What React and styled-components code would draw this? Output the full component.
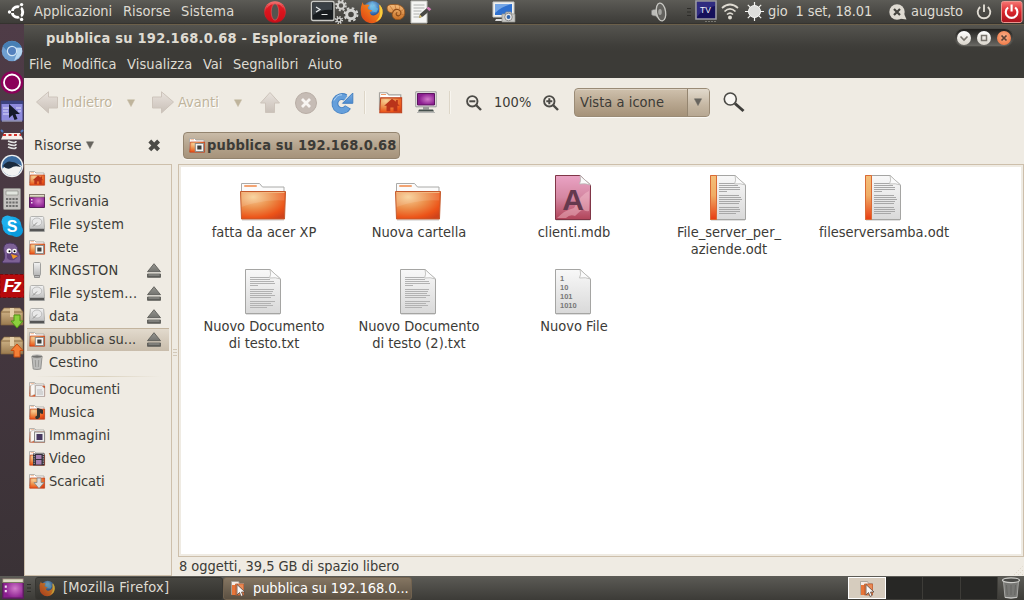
import React from 'react';
import styled, { createGlobalStyle } from 'styled-components';

const Global = createGlobalStyle`
  * { box-sizing: border-box; }
  body {
    margin: 0;
    overflow: hidden;
    font: 14.5px/17px "DejaVu Sans Condensed", "DejaVu Sans", sans-serif;
    font-stretch: condensed;
    color: #3c3b37;
  }
  svg { display: block; flex: none; overflow: visible; }
`;

/* ---------- layout ---------- */
const Desktop = styled.div`
  width: 1024px; height: 600px; display: flex; flex-direction: column; background: #efebe3;
`;
const TopPanel = styled.header`
  height: 24px; flex: none; display: flex; align-items: center; color: #dfdbd2;
  background: linear-gradient(#5c5b56, #454440 70%, #3d3c38);
  border-bottom: 1px solid #35332f;
`;
const Cell = styled.div`
  flex: none; width: ${p => p.$w}px; margin-left: ${p => p.$gap || 0}px; white-space: pre;
  display: flex; align-items: center; height: 23px; letter-spacing: ${p => p.$ls || 0}px;
`;
const Middle = styled.div`height: 552px; flex: none; display: flex;`;
const Launcher = styled.nav`
  width: 24px; flex: none; background: linear-gradient(#4f3c47, #453740 50%, #3a3236);
  display: flex; flex-direction: column;
`;
const LaunchItem = styled.div`flex: none; height: ${p => p.$h}px; margin-top: ${p => p.$gap}px;`;
const Win = styled.section`width: 1000px; display: flex; flex-direction: column; background: #efebe3;`;
const TitleBar = styled.div`
  height: 27px; flex: none; padding: 1px 10px 0 22px; display: flex; align-items: center; justify-content: space-between;
  background: linear-gradient(#55544f, #403f3b 75%, #3c3b37); border-top: 1px solid #6b5f4a;
  color: #dfdbd2; font-weight: bold; white-space: pre; letter-spacing: .22px;
`;
const MenuBar = styled.div`
  height: 27px; flex: none; padding: 0 0 1px 5px; display: flex; align-items: center; background: #3c3b37; color: #dfdbd2;
`;
const MenuEntry = styled.span`width: ${p => p.$w}px; white-space: pre; letter-spacing: ${p => p.$ls || 0}px;`;
const Controls = styled.div`
  width: 60px; height: 19px; border-radius: 10px; display: flex; align-items: center; justify-content: space-between;
  margin-bottom: 2px; padding: 0 2px; background: linear-gradient(#21201e, #6a6964); border: 1px solid #4b4a45;
`;
const Orb = styled.span`
  width: 14px; height: 14px; border-radius: 50%;
  background: ${p => p.$close ? 'radial-gradient(circle at 50% 40%, #f9b08b, #ef6c35)' : 'linear-gradient(#fff, #d9d4ca)'};
`;
const ToolBar = styled.div`height: 47px; flex: none; display: flex; align-items: center; padding: 2px 0 0 12px;`;
const Tool = styled.div`
  flex: none; width: ${p => p.$w}px; margin-left: ${p => p.$gap || 0}px; white-space: pre;
  color: ${p => p.$off ? '#bfb49c' : '#3c3b37'}; text-shadow: ${p => p.$off ? '1px 1px 0 #fff' : 'none'};
`;
const Rule = styled.div`width: 2px; height: 23px; margin-left: ${p => p.$gap}px; background: linear-gradient(90deg, #ddd6c8 50%, #f8f5ef 50%);`;
const Combo = styled.div`
  width: 136px; height: 29px; margin: -1px 0 0 15px; border: 1px solid #9a8b76; border-radius: 4px; display: flex; overflow: hidden;
  background: linear-gradient(#cfc1ad, #b9a891 50%, #a59279); box-shadow: 0 1px 0 #fbf9f5, inset 0 1px 0 #ded3c4;
`;
const ComboText = styled.div`width: 113px; padding: 5px 0 0 5px; border-right: 1px solid #948570; white-space: pre; letter-spacing: .04px;`;
const ComboArrow = styled.div`
  flex: 1; padding-right: 2px; display: flex; align-items: center; justify-content: center; background: linear-gradient(#e2dacd, #c5b7a3 60%, #b7a792);
`;
const Place = styled.div`height: 39px; flex: none; display: flex; align-items: center; padding: 1px 0 0 10px;`;
const PathButton = styled.div`
  width: 217px; height: 27px; border: 1px solid #93846f; border-radius: 4px; margin-left: 22px; padding: 1px 0 0 5px;
  display: flex; align-items: center; gap: 2px; font-weight: bold; white-space: pre; letter-spacing: .17px;
  background: linear-gradient(#c9bba8, #b3a28b 55%, #a6937b); box-shadow: 0 1px 0 #fbf9f5;
`;
const Body = styled.div`flex: 1; display: flex; min-height: 0;`;
const Sidebar = styled.aside`
  width: 148px; flex: none; border: 1px solid #cdbfab; padding: 2px 2px 0; display: flex; flex-direction: column;
`;
const Row = styled.div`
  height: 23px; flex: none; display: flex; align-items: center; padding: 0 8px 2px 2px; white-space: pre;
  background: ${p => p.$on ? 'linear-gradient(#e2dacd, #c9bdac)' : 'none'};
  border-top: 1px solid ${p => p.$on ? '#c3b49e' : 'transparent'};
`;
const RowText = styled.span`flex: 1; padding-left: 4px; letter-spacing: ${p => p.$ls || 0}px;`;
const RowRule = styled.div`height: 1px; margin: 2px 8px 1px; flex: none; background: linear-gradient(90deg, #efebe3, #d9d0bc, #efebe3);`;
const Handle = styled.div`width: 6px; display: flex; flex-direction: column; justify-content: center; gap: 2px; padding: 0 1px 36px;`;
const HandleLine = styled.i`height: 1px; background: #d2c8b8;`;
const Main = styled.main`flex: 1; display: flex; flex-direction: column;`;
const Files = styled.div`
  height: 393px; border: 1px solid #cdbfab; background: #fff;
  box-shadow: inset 0 0 0 2px #efebe3;
  display: grid; grid-template-columns: repeat(5, 155px); grid-auto-rows: 94px; padding: 9px 0 0 6px;
  align-content: start;
`;
const File = styled.figure`
  margin: 0; display: flex; flex-direction: column; align-items: center; text-align: center; white-space: pre;
`;
const FileName = styled.figcaption`margin-top: 2px; padding-left: 3px; letter-spacing: -.02px;`;
const Status = styled.div`flex: 1; padding: 0 0 0 1px; white-space: pre; display: flex; justify-content: space-between; align-items: flex-end;`;
const StatusText = styled.span`line-height: 19px; letter-spacing: -.05px;`;
const BottomPanel = styled.footer`
  height: 24px; flex: none; display: flex; align-items: center; background: linear-gradient(#5c5b56, #3c3b37); color: #dfdbd2;
`;
const Task = styled.div`
  width: ${p => p.$w}px; margin-left: ${p => p.$gap}px; height: 23px; border-radius: 3px; display: flex; align-items: center; white-space: pre;
  gap: ${p => p.$on ? 6 : 8}px; padding: 0 0 ${p => p.$on ? 0 : 1}px ${p => p.$on ? 5 : 3}px; border: 1px solid ${p => p.$on ? '#71624f' : '#373632'};
  background: ${p => p.$on ? 'linear-gradient(#857662, #5b5042)' : 'linear-gradient(#474641, #32312d)'};
  color: ${p => p.$on ? '#fff' : '#dfdbd2'}; letter-spacing: ${p => p.$on ? -.09 : .24}px;
  svg { opacity: ${p => p.$on ? 1 : .7}; }
`;
const Switcher = styled.div`width: 150px; height: 22px; margin-left: 436px; display: grid; grid-template-columns: repeat(4, 1fr); background: #272725;`;
const Space = styled.div`
  border-right: 1px solid #3d3c38; display: flex; align-items: center; justify-content: center;
  ${p => p.$on && 'border: 1px solid #fff; background: #d6ccbe;'}
`;

/* ---------- small drawings ---------- */
const S = ({ w, h, children }) => <svg width={w} height={h} viewBox={`0 0 ${w} ${h}`}>{children}</svg>;

const Defs = styled.svg`position: absolute;`;
const Gradients = () => (
  <Defs width="0" height="0">
    <defs>
      <linearGradient id="paper" x1="0" y1="0" x2="0" y2="1"><stop stopColor="#f8f8f8" /><stop offset="1" stopColor="#d9d9d9" /></linearGradient>
      <radialGradient id="folder" cx=".28" cy=".2" r=".95"><stop stopColor="#f7cf95" /><stop offset=".45" stopColor="#ec8d49" /><stop offset=".8" stopColor="#ec5318" /><stop offset="1" stopColor="#cf431b" /></radialGradient>
      <linearGradient id="spine" x1="0" y1="0" x2="0" y2="1"><stop stopColor="#f4bf7a" /><stop offset=".45" stopColor="#efad66" /><stop offset="1" stopColor="#e83d13" /></linearGradient>
      <linearGradient id="pink" x1="0" y1="0" x2="0" y2="1"><stop stopColor="#eaa3c4" /><stop offset=".5" stopColor="#d487a2" /><stop offset="1" stopColor="#b14459" /></linearGradient>
      <linearGradient id="metal" x1="0" y1="0" x2="0" y2="1"><stop stopColor="#f4f4f4" /><stop offset="1" stopColor="#b5b5b5" /></linearGradient>
      <linearGradient id="eject" x1="0" y1="0" x2="0" y2="1"><stop stopColor="#969691" /><stop offset="1" stopColor="#5b5b57" /></linearGradient>
      <radialGradient id="purple" cx=".6"><stop stopColor="#d27bcb" /><stop offset="1" stopColor="#8b1f90" /></radialGradient>
      <linearGradient id="fade" x1="0" y1="0" x2="0" y2="1"><stop stopColor="#e8e2dc" /><stop offset="1" stopColor="#c9c0b8" /></linearGradient>
      <linearGradient id="blue" x1="0" y1="0" x2="0" y2="1"><stop stopColor="#7caee2" /><stop offset="1" stopColor="#4a8acf" /></linearGradient>
      <radialGradient id="globe" cx=".5" cy=".3"><stop stopColor="#9ad7f4" /><stop offset="1" stopColor="#1d4f9c" /></radialGradient>
      <linearGradient id="flame" x1="0" y1="1" x2="1" y2="0"><stop stopColor="#dc3a13" /><stop offset=".55" stopColor="#ef7a1c" /><stop offset="1" stopColor="#fcd342" /></linearGradient>
      <linearGradient id="red" x1="0" y1="0" x2="0" y2="1"><stop stopColor="#f77673" /><stop offset=".5" stopColor="#d8262c" /><stop offset="1" stopColor="#a9141e" /></linearGradient>
      <linearGradient id="box" x1="0" y1="0" x2="0" y2="1"><stop stopColor="#d8bd91" /><stop offset="1" stopColor="#9a7a4f" /></linearGradient>
      <linearGradient id="shell" x1="0" y1="0" x2="0" y2="1"><stop stopColor="#f6bd7c" /><stop offset="1" stopColor="#c76f24" /></linearGradient>
    </defs>
  </Defs>
);

const Ubuntu = () => (
  <S w={18} h={20}>
    <circle cx="10.5" cy="10" r="5.2" fill="none" stroke="#fff" strokeWidth="3" />
    <path d="M10.5 10 3 10M10.5 10l4-7M10.5 10l4 7" stroke="#504f4a" strokeWidth="2.2" />
    <circle cx="10.5" cy="10" r="3.6" fill="#4e4d48" />
    <circle cx="2.500" cy="10" r="1.7" fill="#fff" /><circle cx="14.6" cy="2.6" r="1.7" fill="#fff" /><circle cx="14.6" cy="17.4" r="1.7" fill="#fff" />
  </S>
);
const Opera = () => <S w={22} h={22}><ellipse cx="11" cy="11" rx="10.8" ry="10.8" fill="url(#red)" /><ellipse cx="11" cy="11.300" rx="10" ry="10" fill="#d80e18" opacity=".75" /><path d="M2 8Q5 1 11 1t9 7q-3-4-5-4.500h-8Q4 5 2 8z" fill="#f98a86" opacity=".6" /><ellipse cx="11" cy="11" rx="3.800" ry="8.200" fill="#55544f" stroke="#f35a5b" strokeWidth=".6" /></S>;
const Terminal = () => <S w={24} h={21}><rect x=".5" y=".5" width="22.5" height="19" rx="1.5" fill="#171b1e" stroke="#c9c9c5" strokeWidth="1.4" /><path d="M2 2h19v7q-10-1-19 5z" fill="#3b4146" /><path d="M5 6l4 2.5-4 2.5M10.500 13.500h6" stroke="#e5e8e8" fill="none" strokeWidth="1.200" /></S>;
const gear = (cx, cy, r, sw) => <g fill="none" stroke="#d2d2cf"><circle cx={cx} cy={cy} r={r} strokeWidth={sw} /><circle cx={cx} cy={cy} r={r + sw / 2 + .6} strokeWidth="2" strokeDasharray={`${(r + sw / 2 + .6) * .4} ${(r + sw / 2 + .6) * .385}`} /></g>;
const Gears = () => <S w={24} h={23}>{gear(6, 5.500, 3.200, 2)}{gear(16, 14.500, 4.300, 3)}{gear(4, 20, 1.900, 1.300)}</S>;
const Firefox = ({ s = 23 }) => (
  <svg width={s} height={s} viewBox="0 0 24 24">
    <circle cx="13" cy="10.500" r="9.500" fill="url(#globe)" />
    <path d="M12 2q3 1 2 4l5 3-2 4-4-1-2-3 1-3z" fill="#63b8e5" opacity=".7" />
    <path d="M3 2q0 3 2 3 3-1 5 .500Q7 8 9 10l4 1-3 2q2 5 7 2 4-2 3-8 0-2-1-3 5 4 4.500 9A11 11 0 0 1 1 13Q0 7 3 2z" fill="url(#flame)" />
    <path d="M21 5q3 4 2.500 8.500-1 7-7 9 5-5 4.500-11z" fill="#f9ce3d" />
  </svg>
);
const Shell = () => <S w={20} h={18}><path d="M1 5Q1 1 8 1.500 16 1 18.500 7 20 14 14 16.500q-5 1-7-2-1.500-3-.5-4.500Q1 9.500 1 5z" fill="url(#shell)" stroke="#94531c" strokeWidth=".8" /><path d="M6.500 10Q8 5.500 12 6.500q4 1.500 2.500 5-2 2.500-4 .5-1-2 .8-2.600" fill="none" stroke="#8a4a18" strokeWidth="1.100" /><path d="M4 3l3.500 5M9 2l1 4.500M14 3l-1 4M17.500 6.500l-3 2M18 12l-3.500-1" stroke="#b8662a" strokeWidth=".6" /></S>;
const Note = () => <S w={22} h={24}><path d="M1 1h16v22H1z" fill="#f5f5f3" stroke="#bdbdb8" /><path d="M3.500 5h11M3.500 8h11M3.500 11h8M3.500 14h6M3.500 17h6" stroke="#aeb0ae" /><path d="M9 18l1-4 7-6 3 2.500-7 6z" fill="#494945" /><path d="M9 18l1-3.500 2 2.500z" fill="#d9bf6b" /><path d="M16.500 8.200l2-1.500 2.800 2.500-2 1.700z" fill="#d67bb7" /></S>;
const Camera = () => <S w={24} h={22}><path d="M1 1h21v15H1z" fill="#f0f0ee" stroke="#c8c8c4" /><path d="M3 3h17v11H3z" fill="#2e70cf" /><path d="M3 3h17Q10 5 3 12z" fill="#75a6e6" /><path d="M4 18h8v2H3z" fill="#ddd" /><path d="M10 13h3l1-2h5l1 2h3v8H10z" fill="#c9c9c6" stroke="#8c8c88" strokeWidth=".7" /><circle cx="16.500" cy="16" r="3.800" fill="#e8e8e8" stroke="#8b8b8b" /><circle cx="16.500" cy="16" r="1.900" fill="#2f65ab" /></S>;
const Speaker = () => <S w={17} h={20}><path d="M.5 8.500q2-1.500 4-1l5-6v17l-5-4.500Q1.500 14 .5 12.500z" fill="#bcbcb8" stroke="#777" strokeWidth=".6" /><ellipse cx="10" cy="10" rx="4.600" ry="9" transform="rotate(-9 10 10)" fill="#63625e" stroke="#c8c8c3" strokeWidth="1.300" /><ellipse cx="9" cy="10" rx="1.800" ry="3" fill="#a3a39f" /></S>;
const Grip = () => <S w={4} h={8}><path d="M0 .500h4M0 4h4M0 7.500h4" stroke="#2d2c29" /></S>;
const Tv = () => <S w={22} h={23}><path d="M1 1h20v18H1z" fill="#15105b" stroke="#9c9ba4" strokeWidth="1.600" /><path d="M2 2h18v4Q8 8 2 17z" fill="#302b80" /><text x="10.500" y="13" fill="#f2f0fa" fontSize="8.500" textAnchor="middle" fontFamily="Liberation Sans">TV</text><path d="M10 21.500h11" stroke="#77766f" strokeDasharray="2 1" /></S>;
const Wifi = () => <S w={18} h={17}><g fill="none" stroke="#dfdbd2" strokeWidth="1.700"><path d="M1 5Q9-2 17 5" /><path d="M3.500 8.500Q9 3 14.500 8.500" /><path d="M6 11.500Q9 8.700 12 11.500" /></g><circle cx="9" cy="14.500" r="2" fill="#dfdbd2" /></S>;
const Sun = () => <S w={19} h={19}><path d="M9.500 0v19M0 9.500h19M2.800 2.800l13.400 13.400M16.200 2.800 2.800 16.200" stroke="#f5f5f1" strokeWidth="1.200" /><circle cx="9.500" cy="9.500" r="6" fill="#dededb" stroke="#f8f8f6" /></S>;
const Chat = () => <S w={18} h={16}><circle cx="8" cy="8" r="7.700" fill="#dfdbd2" /><path d="M10 14.500l7.500 1-3-7z" fill="#dfdbd2" /><path d="M5 5l6 6M11 5l-6 6" stroke="#45443f" strokeWidth="2.200" /></S>;
const PowerGlyph = ({ c, s }) => <svg width={s} height={s} viewBox="0 0 16 16"><path d="M4.200 3A6.300 6.300 0 1 0 11.800 3M8 .5V8" stroke={c} strokeWidth="1.900" fill="none" /></svg>;
const RedPower = () => <S w={22} h={22}><rect x=".5" y=".5" width="20.500" height="21" rx="2" fill="url(#red)" stroke="#e99790" /><g transform="translate(2.600 2.500)"><path d="M4.500 4A5.800 5.800 0 1 0 11.500 4M8 1V8" stroke="#fff" strokeWidth="2.100" fill="none" /></g></S>;

const Chromium = () => <S w={24} h={22}><circle cx="12" cy="11" r="10.300" fill="#6f9fd0" /><path d="M2.500 6Q6 1 12 1q7 0 9.500 6H12q-4 0-4 5z" fill="#477fb5" /><path d="M15 8h7q2 8-8 13l3-8z" fill="#b6d6f1" /><circle cx="12" cy="11" r="4.600" fill="#5481be" stroke="#d2e5f4" strokeWidth="1.200" /></S>;
const Ring = () => <S w={24} h={23}><circle cx="12" cy="11.500" r="11.300" fill="#8b0059" /><circle cx="12" cy="11.500" r="8" fill="none" stroke="#fff" strokeWidth="1.800" /></S>;
const Pointer = () => <S w={24} h={24}><path d="M1 2h22v20H1z" fill="#8e8bdc" stroke="#3b3b70" /><path d="M1 2h22v3H1z" fill="#3c4380" /><path d="M3 9h7M3 12h5M3 15h6M16 9h5M18 12h3" stroke="#dcdcfa" /><path d="M9 5v14l3.500-3 2 5 3-1-2-5h4.500z" fill="#151a2b" /><path d="M2 22h20" stroke="#b9b9cc" /></S>;
const Boing = () => <S w={24} h={22}><path d="M1 10.500 4 4h16l3 6.500z" fill="#f5efeb" /><path d="M3 6h18" stroke="#d4302b" strokeWidth="2" strokeDasharray="3 2.500" /><path d="M8 12q8 3 8 0M8 15q8 3 8 0M8 18q8 3 8 0" stroke="#ddd" strokeWidth="1.700" fill="none" /><path d="M1 1l2 2M23 1l-2 2" stroke="#4f79bd" strokeWidth="2" /></S>;
const Swallow = () => <S w={24} h={24}><circle cx="12" cy="12" r="11.300" fill="#eef1f2" /><circle cx="12" cy="12" r="10" fill="#3b6b9e" /><path d="M2 15q10-9 20-3-2 10-10 10-7-1-10-7z" fill="#f2f3f2" /><path d="M3 12q4-6 9-4 4 0 9 5-7-2-10 1-4 2-8-2z" fill="#1a2b3e" /></S>;
const Calc = () => <S w={24} h={22}><rect x="3.500" y=".5" width="17" height="21" rx="1" fill="#c5c3c0" stroke="#8d8b88" /><path d="M6 3h12v4H6z" fill="#e2e5df" stroke="#84847e" strokeWidth=".6" /><path d="M6 11h12M6 14.500h12M6 18h12" stroke="#6d6d6c" strokeWidth="2" strokeDasharray="2.200 1" /></S>;
const Skype = () => <S w={24} h={24}><circle cx="12" cy="12" r="9.500" fill="#13a8e8" /><circle cx="7.500" cy="7.500" r="6" fill="#1fb0ed" /><circle cx="16.500" cy="16.500" r="6.500" fill="#0a9add" /><text x="12" y="17.500" textAnchor="middle" fill="#fff" fontSize="16" fontWeight="bold" fontFamily="Liberation Sans">S</text></S>;
const Pidgin = () => <S w={24} h={22}><path d="M2 20Q6 17 4 10 2 1 10 1q8 0 8 8 4 4 2 12H3z" fill="#7d6196" stroke="#49345e" /><path d="M7 11q7-2 12 3l-5 4q-5 1-7-2z" fill="#60417a" /><circle cx="9" cy="9" r="2.500" fill="#fff" /><circle cx="14.500" cy="9" r="2.300" fill="#fff" /><circle cx="9.500" cy="9.300" r="1" /><circle cx="14.500" cy="9.300" r="1" /><path d="M11 12l7 2-5 3z" fill="#f19a26" /></S>;
const Filezilla = () => <S w={24} h={24}><path d="M0 .5h24v23H0z" fill="#b60a0c" stroke="#7c0708" strokeDasharray="3 2" /><text x="11.500" y="17.500" textAnchor="middle" fill="#fff" fontSize="18" fontWeight="bold" fontStyle="italic" fontFamily="Liberation Sans" letterSpacing="-2">Fz</text></S>;
const Package = ({ up }) => <S w={24} h={22}><path d="M1 5l3-4h16l3 4v13H1z" fill="url(#box)" stroke="#81653f" strokeWidth=".7" /><path d="M1 5h22" stroke="#8b6d43" /><path d="M10 1h4v9h-4z" fill="#e4cfaa" />{up ? <path d="M17 8l6 6.500h-3V21h-6v-6.500h-3z" fill="#f47e36" stroke="#c54b10" /> : <path d="M14 8h6v6h3l-6 7-6-7h3z" fill="#8bd13d" stroke="#4e9314" />}</S>;

const BackArrow = ({ flip }) => <S w={22} h={23}><g transform={flip ? 'translate(22 0) scale(-1 1)' : undefined}><path d="M.5 11 12.500 .8V6H21.500V17H12.500v5z" fill="url(#fade)" stroke="#cdc4bb" /></g></S>;
const UpArrow = () => <S w={20} h={21}><path d="M10 .5l9.500 10.500h-5v9.500h-9V11H.5z" fill="url(#fade)" stroke="#cdc4bb" /></S>;
const Tri = ({ c = '#67645e' }) => <svg width="8" height="8" viewBox="0 0 8 8"><path d="M.4.8h7.200L4 7.600z" fill={c} stroke={c} strokeWidth=".5" /></svg>;
const Stop = () => <S w={22} h={22}><circle cx="11" cy="11" r="10.500" fill="#c6bcb5" stroke="#b9aea6" /><path d="M7 7l8 8M15 7l-8 8" stroke="#f8f5f2" strokeWidth="2.800" /></S>;
const Reload = () => <S w={22} h={22}><g transform="translate(-1 .5)"><path d="M17 14.500A7 7 0 1 1 14.500 5" fill="none" stroke="#4681c1" strokeWidth="6.800" /><path d="M21.800 .5v10.300H11.500z" fill="url(#blue)" stroke="#4681c1" /><path d="M16.600 15A7 7 0 1 1 15 5.500" fill="none" stroke="#659fdb" strokeWidth="5" /><path d="M3 8Q6 2 11 2.300" stroke="#b6d6f5" fill="none" /></g></S>;
const Big = ({ kind, w, h }) => <svg width={w} height={h} viewBox="0 0 16 15"><path d="M.5 12V.5h5l1.500 1.500h8V12z" fill="#fff" stroke="#a5a39e" strokeWidth=".8" /><path d="M1.500 1.700h3.500" stroke="#ef9b67" strokeWidth=".7" />
  <path d="M1.300 4h14.300v10.200H.7z" fill="url(#folder)" stroke="#bd421e" strokeWidth=".7" />{kind}</svg>;
const home = <path d="M9 4.600 3.700 9.300h1.600v3.900h2.600v-2.700h2.200v2.700h2.600V9.300h1.600l-1.300-1.200V5.500h-1.200v1.100z" fill="#b9331a" />;
const netw = <g><rect x="6.300" y="5.500" width="8.300" height="8" fill="#f4f4f2" stroke="#8d8d8a" /><rect x="8.300" y="7.500" width="4.200" height="4" fill="#3e3e3c" /></g>;
const flap = <path d="M1.600 3.500 6 1.500v10.800l-4.400 2z" fill="#fbf8f5" stroke="#b0aca6" strokeWidth=".6" />;
const doc = <g>{flap}<path d="M6.500 3.500h6l3 3v8h-9zM8 8h5M8 10h6M8 12h6" fill="#ececec" stroke="#aaa" strokeWidth=".7" /></g>;
const note = <path d="M8.500 11V3.500l5 1.500v3.500l-3-1V12q-1 2.300-3.500 1.500Q6 11 8.500 11z" fill="#343432" stroke="#343432" />;
const pic = <g>{flap}<rect x="5.500" y="4" width="10" height="10" fill="#eee" stroke="#8b8b88" /><rect x="7.500" y="6" width="6" height="6" fill="#46375f" /></g>;
const film = <g><rect x="4" y="2.500" width="11.500" height="12" fill="#34313a" /><path d="M7 4h5.500v4H7zM7 9h5.500v4.500H7z" fill="#a780b2" /><path d="M5.200 3v11M14.300 3v11" stroke="#ccc" strokeDasharray="1 1.200" /></g>;
const down = <path d="M8 4h4v4.500h3L10 14.500 5 8.500h3z" fill="#ddd" stroke="#868683" strokeWidth=".8" />;
const FolderIcon = ({ kind }) => <Big kind={kind} w={16} h={15} />;
const DesktopIcon = ({ w = 16, h = 14 }) => <svg width={w} height={h} viewBox="0 0 16 14" preserveAspectRatio="none"><path d="M.5.5h15v13H.5z" fill="url(#purple)" stroke="#59205b" /><path d="M.5.500h15v2.500H.5z" fill="#dfdcc6" stroke="#7b7a62" strokeWidth=".7" /><path d="M2 5h1.500v1.500H2zM2 8h1.500v1.500H2z" fill="#f1e3f0" /></svg>;
const Disk = () => <S w={16} h={16}><path d="M2.500.5h11q1 0 1.200 1l.8 10v4H.5v-4l.8-10q.2-1 1.200-1z" fill="url(#metal)" stroke="#a3a3a1" strokeWidth=".8" /><path d="M1 12.800h14v2.400H1z" fill="#555" /><ellipse cx="8" cy="6" rx="4.800" ry="4" fill="#e9e9e9" stroke="#b2b2b2" strokeWidth=".8" /><path d="M8 6.500l-4 4" stroke="#8c8c8a" /></S>;
const Usb = () => <S w={16} h={16}><rect x="4.500" y=".5" width="7" height="13" rx="1" fill="url(#metal)" stroke="#a0a09e" /><path d="M5.500 13.500h5V15.500h-5z" fill="#bababa" stroke="#777" strokeWidth=".7" /></S>;
const Bin = () => <S w={16} h={16}><path d="M3 3h10l-1.200 12q-3.800 1-7.600 0z" fill="#bcbcba" stroke="#8c8c8a" strokeWidth=".9" /><ellipse cx="8" cy="2.600" rx="5.500" ry="1.700" fill="#72726f" stroke="#b6b6b3" /><path d="M6.300 6l.4 7M9.700 6l-.4 7" stroke="#8f8f8d" strokeWidth=".8" /></S>;
const PanelBin = () => <S w={20} h={22}><path d="M2.500 4h15l-1.500 16.500q-6 1.300-12 0z" fill="#777774" stroke="#a5a5a2" /><path d="M5.500 8l.8 10M10 8v10M14.500 8l-.8 10" stroke="#666663" /><ellipse cx="10" cy="3.200" rx="8.500" ry="2.400" fill="#4b4b48" stroke="#cfcfcb" strokeWidth="1.300" /><path d="M4 20.300q6 1.300 12 0" stroke="#c9c9c6" fill="none" /></S>;
const Eject = () => <S w={14} h={15}><path d="M7 .7l6.500 8H.5zM.5 11h13v3.300H.5z" fill="url(#eject)" stroke="#5c5c58" strokeWidth=".9" /><path d="M1.500 12h11" stroke="#a9a9a5" strokeWidth=".8" /></S>;
const Monitor = () => <S w={22} h={23}><path d="M.8.800h20.400v15H.8z" fill="#f2f2f0" stroke="#989896" /><path d="M2.500 2.500h17v11.500h-17z" fill="url(#purple)" stroke="#5d145f" /><path d="M8 16h6v2.500H8z" fill="#999" /><path d="M4 18.500h14l1 2H3z" fill="#444f4c" /><path d="M2 21.500h18" stroke="#b7b7b5" /></S>;
const Zoom = ({ plus }) => <S w={16} h={16}><path d="M9.500 9.500 15 15" stroke="#4c4b47" strokeWidth="2.400" /><circle cx="6.300" cy="6.300" r="5.200" fill="#f1ede6" stroke="#4c4b47" strokeWidth="1.900" /><path d={plus ? 'M3.300 6.300h6M6.300 3.300v6' : 'M3.300 6.300h6'} stroke="#4c4b47" strokeWidth="2" /></S>;
const Search = () => <S w={22} h={21}><path d="M12 11.500l8.500 7.500" stroke="#3f3e3b" strokeWidth="3" /><circle cx="7.300" cy="7" r="6" fill="#f8f6f2" stroke="#4a4945" strokeWidth="1.600" /></S>;
const CloseX = () => <S w={13} h={13}><path d="M1.800 2l8.800 8.800M10.600 2l-8.800 8.800" stroke="#4c4b47" strokeWidth="4" /></S>;

const FolderFile = () => <S w={48} h={48}>
  <path d="M2.500 20V9.500h18l3 3.500h21.500V20z" fill="#fbfbfb" stroke="#aaaaa8" /><path d="M6 12h11" stroke="#f3a473" strokeWidth="2" strokeLinecap="round" />
  <path d="M1.500 17.500h45l-1 27.500H2.500z" fill="url(#folder)" stroke="#c45a2c" /><path d="M2.500 18.500h43l-.3 8Q25 25 2.500 33z" fill="#fff" opacity=".12" /><path d="M2.500 18.500h43" stroke="#f3b781" /><path d="M3 46.200h42" stroke="#000" opacity=".15" /></S>;
const lines = (x, ys, ws, c) => <path d={ys.map((y, i) => `M${x} ${y}h${ws[i]}`).join('')} stroke={c} />;
const Sheet = ({ fill = 'url(#paper)', edge = '#a5a5a3', children }) => <S w={48} h={48}>
  <path d="M7 46.500h34" stroke="#000" opacity=".12" />
  <path d="M6.500 1.500h24.500l10.500 9.500v34.500h-35z" fill={fill} stroke={edge} />{children}
  <path d="M31 1.500q1.500 5-.5 8.500 6-1 11 1z" fill="#fbfbfb" stroke="#b7b7b5" strokeWidth=".8" /></S>;
const ys = [9.5, 11.5, 13.5, 15.5, 17.5, 21.5, 23.5, 25.5, 27.5, 29.5, 33.5, 35.5, 37.500, 39.5];
const TextFile = () => <Sheet>{lines(11, ys, [19, 20, 24, 25, 8, 24, 23, 22, 25, 21, 25, 21, 23, 17], '#b2b2b2')}</Sheet>;
const OdtFile = () => <Sheet><path d="M6.500 1.500h6v44h-6z" fill="url(#spine)" stroke="#db6b35" />{lines(15, ys, [18, 19, 21, 21, 8, 20, 22, 23, 21, 20, 20, 21, 21, 17], '#a8a8a8')}</Sheet>;
const MdbFile = () => <Sheet fill="url(#pink)" edge="#803647"><path d="M8 44q8-8 17-10 7-14 15-17v20q-4 1-6-2-5 4-8 7-5-2-9 2z" fill="#f6c4cf" opacity=".45" /><text x="24" y="36" textAnchor="middle" fontSize="30" fontWeight="bold" fontFamily="Liberation Sans" fill="#64394e">A</text></Sheet>;
const BinFile = () => <Sheet><g fontFamily="Liberation Sans" fontSize="7.500" fontWeight="bold" fill="#777" fontStretch="normal">{['1', '10', '101', '1010'].map((t, i) => <text key={t} x="11" y={12.500 + i * 9.100}>{t}</text>)}</g></Sheet>;
const TaskFolder = () => <S w={18} h={17}><path d="M2.500 1.500h7l1 2h4v11h-12z" fill="#f4ede6" stroke="#a09a92" strokeWidth=".8" /><path d="M3 5h4v10H3z" fill="#e77538" /><path d="M6.500 4h8v11h-8z" fill="#eb8a55" stroke="#c8602e" strokeWidth=".8" /><path d="M8 4.500v10.500l2.500-2.500 1.500 4 2-1-1.500-3.500h3.500z" fill="#f8f8f8" stroke="#5a473d" strokeWidth=".8" /></S>;

/* ---------- data ---------- */
const launchers = [
  [Chromium, 22, 16], [Ring, 23, 9], [Pointer, 24, 5], [Boing, 22, 6], [Swallow, 24, 3], [Calc, 22, 10],
  [Skype, 24, 4], [Pidgin, 22, 4], [Filezilla, 24, 10], [Package, 22, 9], [() => <Package up />, 22, 7],
];
const menus = [['File', 33, .3], ['Modifica', 65], ['Visualizza', 76, .1], ['Vai', 30], ['Segnalibri', 75], ['Aiuto', 40]];
const places = [
  { name: 'augusto', icon: <FolderIcon kind={home} />, ls: -.1 },
  { name: 'Scrivania', icon: <DesktopIcon /> },
  { name: 'File system', icon: <Disk />, ls: .2 },
  { name: 'Rete', icon: <FolderIcon kind={netw} /> },
  { name: 'KINGSTON', icon: <Usb />, eject: true, ls: .1 },
  { name: 'File system...', icon: <Disk />, eject: true, ls: .2 },
  { name: 'data', icon: <Disk />, eject: true },
  { name: 'pubblica su...', icon: <FolderIcon kind={netw} />, eject: true, on: true },
  { name: 'Cestino', icon: <Bin /> },
];
const bookmarks = [['Documenti', doc], ['Musica', note, .15], ['Immagini', pic], ['Video', film], ['Scaricati', down, -.1]];
const files = [
  ['fatta da acer XP', FolderFile], ['Nuova cartella', FolderFile], ['clienti.mdb', MdbFile], ['File_server_per_\naziende.odt', OdtFile],
  ['fileserversamba.odt', OdtFile], ['Nuovo Documento\ndi testo.txt', TextFile], ['Nuovo Documento\ndi testo (2).txt', TextFile], ['Nuovo File', BinFile],
];

export default function App() {
  return (
    <Desktop>
      <Global />
      <Gradients />
      <TopPanel>
        <Cell $w={18} $gap={7}><Ubuntu /></Cell>
        <Cell $w={79} $gap={9}>Applicazioni</Cell>
        <Cell $w={50} $gap={10}>Risorse</Cell>
        <Cell $w={60} $gap={8} $ls={.1}>Sistema</Cell>
        <Cell $w={22} $gap={23}><Opera /></Cell>
        <Cell $w={24} $gap={25}><Terminal /></Cell>
        <Cell $w={24}><Gears /></Cell>
        <Cell $w={24} $gap={1}><Firefox /></Cell>
        <Cell $w={20} $gap={2}><Shell /></Cell>
        <Cell $w={22} $gap={4}><Note /></Cell>
        <Cell $w={24} $gap={60}><Camera /></Cell>
        <Cell $w={17} $gap={135}><Speaker /></Cell>
        <Cell $w={4} $gap={19}><Grip /></Cell>
        <Cell $w={22} $gap={4}><Tv /></Cell>
        <Cell $w={18} $gap={4}><Wifi /></Cell>
        <Cell $w={19} $gap={6}><Sun /></Cell>
        <Cell $w={106} $gap={4} $ls={-.12}>gio  1 set, 18.01</Cell>
        <Cell $w={18} $gap={15}><Chat /></Cell>
        <Cell $w={54} $gap={4} $ls={-.1}>augusto</Cell>
        <Cell $w={16} $gap={11}><PowerGlyph c="#dfdbd2" s={16} /></Cell>
        <Cell $w={22} $gap={9}><RedPower /></Cell>
      </TopPanel>
      <Middle>
        <Launcher>{launchers.map(([Icon, h, gap], i) => <LaunchItem key={i} $h={h} $gap={gap}><Icon /></LaunchItem>)}</Launcher>
        <Win>
          <TitleBar>
            <span>pubblica su 192.168.0.68 - Esplorazione file</span>
            <Controls>
              <Orb><S w={14} h={14}><path d="M3.500 5.500 7 9l3.500-3.500" fill="none" stroke="#77736c" strokeWidth="1.600" /></S></Orb>
              <Orb><S w={14} h={14}><path d="M4.500 4.500h5v5h-5z" fill="none" stroke="#77736c" strokeWidth="1.500" /></S></Orb>
              <Orb $close><S w={14} h={14}><path d="M4.500 4.500l5 5M9.500 4.500l-5 5" stroke="#5c4236" strokeWidth="1.700" /></S></Orb>
            </Controls>
          </TitleBar>
          <MenuBar>{menus.map(([t, w, ls]) => <MenuEntry key={t} $w={w} $ls={ls}>{t}</MenuEntry>)}</MenuBar>
          <ToolBar>
            <Tool $w={22}><BackArrow /></Tool>
            <Tool $w={52} $gap={4} $off>Indietro</Tool>
            <Tool $w={8} $gap={13}><Tri c="#bfb49c" /></Tool>
            <Tool $w={22} $gap={17}><BackArrow flip /></Tool>
            <Tool $w={44} $gap={4} $off>Avanti</Tool>
            <Tool $w={8} $gap={12}><Tri c="#bfb49c" /></Tool>
            <Tool $w={20} $gap={18}><UpArrow /></Tool>
            <Tool $w={22} $gap={15}><Stop /></Tool>
            <Tool $w={22} $gap={15}><Reload /></Tool>
            <Rule $gap={10} />
            <Tool $w={24} $gap={12}><Big kind={home} w={25} h={22} /></Tool>
            <Tool $w={22} $gap={13}><Monitor /></Tool>
            <Rule $gap={12} />
            <Tool $w={16} $gap={15}><Zoom /></Tool>
            <Tool $w={38} $gap={12}>100%</Tool>
            <Tool $w={16} $gap={11}><Zoom plus /></Tool>
            <Combo><ComboText>Vista a icone</ComboText><ComboArrow><Tri /></ComboArrow></Combo>
            <Tool $w={22} $gap={13}><Search /></Tool>
          </ToolBar>
          <Place>
            <Tool $w={48}>Risorse</Tool>
            <Tool $w={8} $gap={4}><Tri /></Tool>
            <Tool $w={13} $gap={54}><CloseX /></Tool>
            <PathButton><FolderIcon kind={netw} /><span>pubblica su 192.168.0.68</span></PathButton>
          </Place>
          <Body>
            <Sidebar>
              {places.map(p => <Row key={p.name} $on={p.on}>{p.icon}<RowText $ls={p.ls}>{p.name}</RowText>{p.eject && <Eject />}</Row>)}
              <RowRule />
              {bookmarks.map(([name, kind, ls]) => <Row key={name}><FolderIcon kind={kind} /><RowText $ls={ls}>{name}</RowText></Row>)}
            </Sidebar>
            <Handle><HandleLine /><HandleLine /><HandleLine /></Handle>
            <Main>
              <Files>{files.map(([name, Icon]) => <File key={name}><Icon /><FileName>{name}</FileName></File>)}</Files>
              <Status>
                <StatusText>8 oggetti, 39,5 GB di spazio libero</StatusText>
                <S w={12} h={12}><path d="M2 11l9-9M6 11l5-5M10 11l1-1" stroke="#d8cfc0" strokeDasharray="1 2" /></S>
              </Status>
            </Main>
          </Body>
        </Win>
      </Middle>
      <BottomPanel>
        <Cell $w={22} $gap={2}><DesktopIcon w={22} h={21} /></Cell>
        <Cell $w={4} $gap={3}><Grip /></Cell>
        <Task $w={188} $gap={4}><Firefox s={16} />[Mozilla Firefox]</Task>
        <Task $w={189} $gap={0} $on><TaskFolder />pubblica su 192.168.0...</Task>
        <Switcher><Space $on><TaskFolder /></Space><Space /><Space /><Space /></Switcher>
        <Cell $w={20} $gap={3}><PanelBin /></Cell>
      </BottomPanel>
    </Desktop>
  );
}
